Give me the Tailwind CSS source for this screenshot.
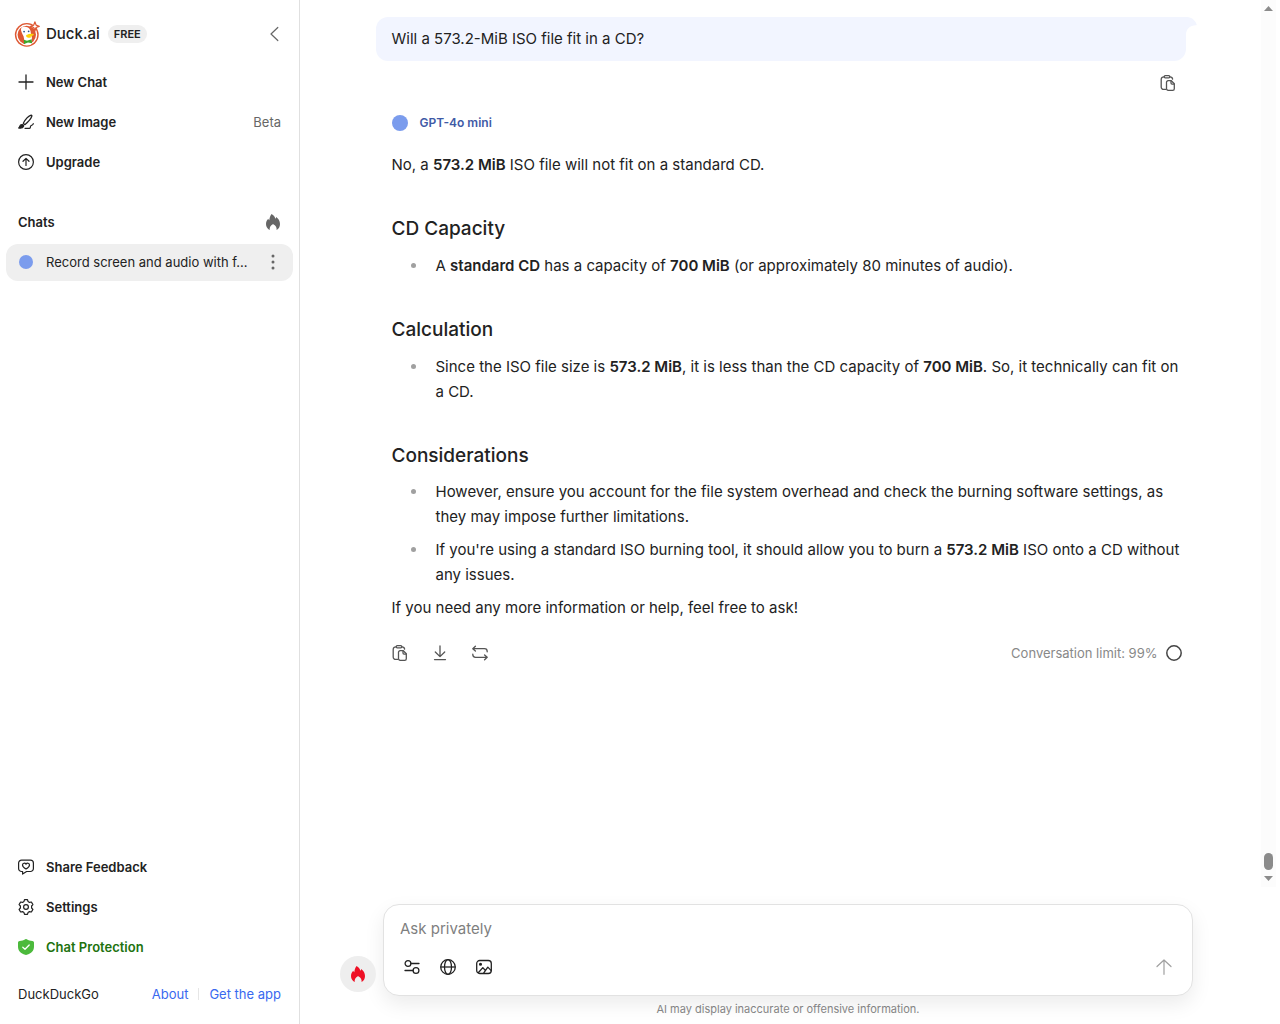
<!DOCTYPE html>
<html lang="en">

<head>
    <meta charset="UTF-8">
    <meta name="viewport" content="width=device-width, initial-scale=1.0">
    <script src="https://cdn.jsdelivr.net/npm/@tailwindcss/browser@4"></script>
    <title>Duck.ai</title>
</head>

<body class="flex h-screen overflow-hidden bg-white font-['Inter',sans-serif] text-[#222222]">
    <!-- shared icons -->
    <svg class="hidden">
        <symbol id="fire" viewBox="0 0 16 16">
            <path fill="currentColor" d="M6.6 0c2 1.1 3.3 2.7 3.7 4.8.5-.4.8-1 .9-1.7C13.600 4.900 15 7.200 15 10c0 2.800-1.300 4.900-3.400 6 .3-2.500-.8-4.500-2.900-5.500-.4-.2-.9-.2-1.300 0-2 1-3 3-2.700 5.500C2.400 14.900 1 12.700 1 10c0-2.100.9-3.900 2.400-5.200.1.700.4 1.200.9 1.500C4.500 3.700 5.300 1.600 6.600 0Z"/>
        </symbol>
        <symbol id="copy" viewBox="0 0 16 16">
            <g fill="none" stroke="currentColor" stroke-width="1.300" stroke-linejoin="round" stroke-linecap="round">
                <path d="M5.500 14.400H3.700a2.500 2.500 0 0 1-2.500-2.500V4.400a2.600 2.600 0 0 1 2.600-2.600h.4M9.800 1.800h.2a2.600 2.600 0 0 1 2.600 2.300"/>
                <rect x="4.200" y=".700" width="5.600" height="2.100" rx="1"/>
                <path d="M8.100 5.700h3.200l3 3v5a1.600 1.600 0 0 1-1.600 1.600H8.100a1.600 1.600 0 0 1-1.600-1.600V7.300a1.600 1.600 0 0 1 1.600-1.600Z"/>
                <path d="M11 5.900v2.200c0 .6.400 1 1 1h2.100"/>
            </g>
        </symbol>
    </svg>

    <aside class="flex w-[300px] shrink-0 flex-col border-r border-[#e0e0e0] px-[6px] text-[13px] leading-5">
        <header class="flex h-[62px] items-center pt-[6px] pr-[10px] pl-2">
            <svg class="size-[26px]" viewBox="0 0 24 24">
                <circle cx="11.800" cy="12.800" r="11" fill="#de5833"/>
                <circle cx="11.800" cy="12.800" r="9.100" fill="#de5833" stroke="#fff" stroke-width="1.200"/>
                <path fill="#fff" d="M6.500 8.500C6 6.300 7.700 4.800 10 5.300c3.500.2 5.500 2.300 5.500 5.700l1.100 4.200-1 6.300c-1.700.6-3.600.7-5.300.2L8.800 14c-1-2-1.900-3.600-2.300-5.500Z"/>
                <circle cx="9.300" cy="9.800" r=".800" fill="#2d4f8e"/>
                <circle cx="13.500" cy="9.500" r=".800" fill="#2d4f8e"/>
                <path fill="#fdd20a" d="M11.500 12.900c1.800-1 4-1.300 6.600-1l.2 1.100c-1.400.8-2.500 1.100-3.500 1.200l2 .4c-1.600 1.200-4.300 1-5.300-.1-.5-.6-.4-1.200 0-1.600Z"/>
                <path fill="#3ca82b" d="m9 17.200 3 1 4.200-1.300.5 3.700-3.800-.8-3.500 1.500Z"/>
                <path fill="#fff" stroke="#de5833" stroke-width="1.200" stroke-linejoin="round" d="m19.300.800 1.100 3 2.900 1.100-2.900 1.100-1.100 3-1.100-3-2.900-1.100 2.900-1.100Z"/>
            </svg>
            <h1 class="ml-[6px] text-[15px] font-medium">Duck.ai</h1>
            <span class="ml-2 rounded-full bg-[#efefef] px-[6px] text-[11px] leading-[18px] font-semibold">FREE</span>
            <button aria-label="Collapse sidebar" class="ml-auto text-[#666666]">
                <svg class="size-4" viewBox="0 0 16 16" fill="none" stroke="currentColor" stroke-width="1.200" stroke-linecap="round" stroke-linejoin="round"><path d="M10.800 1.500 4 8l6.800 6.500"/></svg>
            </button>
        </header>

        <nav class="font-semibold">
            <button class="flex h-10 w-full items-center gap-3 px-3">
                <svg class="size-4" viewBox="0 0 16 16" fill="none" stroke="currentColor" stroke-width="1.300" stroke-linecap="round"><path d="M8 1v14M1 8h14"/></svg>
                New Chat
            </button>
            <button class="flex h-10 w-full items-center gap-3 px-3">
                <svg class="size-4" viewBox="0 0 16 16" fill="none" stroke="currentColor" stroke-width="1.200" stroke-linecap="round" stroke-linejoin="round">
                    <path d="M5.300 9.300C7.600 5 10.700 1.900 13.200 1.200c.5-.1.800.3.700.800-.700 2.500-3.500 5.700-7.100 8.700Z"/>
                    <path fill="currentColor" d="M4.300 10.700c1 .1 1.500.9 1.200 1.800-.6 1.400-2.700 1.900-4.900 1.500.9-.4.900-.9 1.100-1.600.3-1.100 1.300-1.800 2.600-1.700Z"/>
                    <path d="M7 14.300h4.500c1.400 0 .5-1.700 1.300-2.500.8-.8 2.500-.5 2.500-2.300"/>
                </svg>
                New Image
                <span class="ml-auto font-normal text-[#666666]">Beta</span>
            </button>
            <button class="flex h-10 w-full items-center gap-3 px-3">
                <svg class="size-4" viewBox="0 0 16 16" fill="none" stroke="currentColor" stroke-width="1.200" stroke-linecap="round" stroke-linejoin="round"><circle cx="8" cy="8" r="7.400"/><path d="M8 11.500v-7M5 7.300l3-2.900 3 2.900"/></svg>
                Upgrade
            </button>
        </nav>

        <section class="mt-5">
            <div class="flex h-10 items-center justify-between px-3">
                <h2 class="font-semibold">Chats</h2>
                <button aria-label="Clear chats" class="text-[#666666]"><svg class="size-4"><use href="#fire"/></svg></button>
            </div>
            <div class="mt-[2px] flex h-[37px] items-center rounded-xl bg-[#efefef] px-3 pb-[2px]">
                <a href="#" class="flex min-w-0 flex-1 items-center gap-3">
                    <span class="m-px size-[14px] shrink-0 rounded-full bg-[#7b9ced]"></span>
                    <span class="truncate">Record screen and audio with f...</span>
                </a>
                <button aria-label="Chat options" class="text-[#666666]">
                    <svg class="size-4" viewBox="0 0 16 16" fill="currentColor"><circle cx="8" cy="2" r="1.500"/><circle cx="8" cy="8" r="1.500"/><circle cx="8" cy="14" r="1.500"/></svg>
                </button>
            </div>
        </section>

        <footer class="mt-auto">
            <button class="flex h-10 w-full items-center gap-3 px-3 font-semibold">
                <svg class="size-4" viewBox="0 0 16 16" fill="none" stroke="currentColor" stroke-width="1.200" stroke-linejoin="round">
                    <path d="M3.600 1.100h8.800a3 3 0 0 1 3 3v5.400a3 3 0 0 1-3 3H8.600l-4 2.600v-2.600h-1a3 3 0 0 1-3-3V4.100a3 3 0 0 1 3-3Z"/>
                    <path d="M8 10C5.600 8.700 4.500 7.500 4.500 6c0-1.900 2.500-2.500 3.500-.8 1-1.700 3.500-1.100 3.500.8 0 1.500-1.100 2.700-3.500 4Z"/>
                </svg>
                Share Feedback
            </button>
            <button class="flex h-10 w-full items-center gap-3 px-3 font-semibold">
                <svg class="size-4" viewBox="0 0 16 16" fill="none" stroke="currentColor" stroke-width="1.200" stroke-linejoin="round">
                    <path d="M6.500.700h3l.6 1.900 1.300.8 2-.4 1.500 2.600L13.600 7v2l1.300 1.400-1.500 2.600-2-.4-1.300.800-.6 1.900h-3l-.6-1.900-1.300-.800-2 .4-1.500-2.600L2.400 9V7L1.100 5.600 2.600 3l2 .4 1.300-.800Z"/>
                    <circle cx="8" cy="8" r="2.400"/>
                </svg>
                Settings
            </button>
            <button class="flex h-10 w-full items-center gap-3 px-3 font-semibold text-[#21720f]">
                <svg class="size-4" viewBox="0 0 16 16"><path fill="#4cba3c" d="M7.200.300a1.500 1.500 0 0 1 1.600 0c1.600 1 3.400 1.500 5.600 1.700.9.1 1.600.8 1.600 1.700v3.800c0 4.200-2.700 7-7.200 8.300a3 3 0 0 1-1.600 0C2.700 14.500 0 11.700 0 7.500V3.700c0-.9.7-1.600 1.600-1.700C3.800 1.800 5.600 1.300 7.200.300Z"/><path fill="none" stroke="#fff" stroke-width="1.300" stroke-linecap="round" stroke-linejoin="round" d="m4.800 8.200 2.200 2.100 4.200-4.300"/></svg>
                Chat Protection
            </button>
            <div class="flex h-[57px] items-center px-3 pb-1">
                <span>DuckDuckGo</span>
                <a href="#" class="ml-auto text-[#3969ef]">About</a>
                <span class="mx-[10px] h-3 w-px bg-[#e6e6e6]"></span>
                <a href="#" class="text-[#3969ef]">Get the app</a>
            </div>
        </footer>
    </aside>

    <main class="flex min-w-0 flex-1 flex-col">
        <div class="mr-1 flex min-h-0 flex-1">
            <div class="min-w-0 flex-1 overflow-hidden px-6">
                <div class="mx-auto max-w-[810px] pt-[17px] text-[15px] leading-[25px]">
                    <div class="relative rounded-xl rounded-tr-none bg-[#f2f5ff] px-4 py-[10px] leading-6">
                        Will a 573.2-MiB ISO file fit in a CD?
                        <svg class="absolute top-0 left-full h-5 w-[11px]" viewBox="0 0 11 20"><path fill="#f2f5ff" d="M0 0c5 0 9 2.500 10.600 7.300.2.700-.1 1-.8 1C4 8.500 0 12 0 18Z"/></svg>
                    </div>
                    <div class="mt-[14px] flex justify-end pr-[10px] text-[#555555]">
                        <button aria-label="Copy message"><svg class="size-4"><use href="#copy"/></svg></button>
                    </div>

                    <article class="pt-[22px] pl-4">
                        <div class="flex h-5 items-center gap-3 text-xs font-semibold text-[#3f5aa6]">
                            <span class="size-4 rounded-full bg-[#7b9ced]"></span>GPT-4o mini
                        </div>
                        <p class="mt-[19px]">No, a <strong class="font-semibold">573.2 MiB</strong> ISO file will not fit on a standard CD.</p>

                        <h3 class="mt-[38px] text-[19px] leading-7 font-medium">CD Capacity</h3>
                        <ul class="mt-[10px] list-none">
                            <li class="flex gap-5"><span class="mt-[10px] ml-[19px] size-[5px] shrink-0 rounded-full bg-[#a0a0a0]"></span>
                                <p>A <strong class="font-semibold">standard CD</strong> has a capacity of <strong class="font-semibold">700 MiB</strong> (or approximately 80 minutes of audio).</p>
                            </li>
                        </ul>

                        <h3 class="mt-[38px] text-[19px] leading-7 font-medium">Calculation</h3>
                        <ul class="mt-[10px] list-none">
                            <li class="flex gap-5"><span class="mt-[10px] ml-[19px] size-[5px] shrink-0 rounded-full bg-[#a0a0a0]"></span>
                                <p>Since the ISO file size is <strong class="font-semibold">573.2 MiB</strong>, it is less than the CD capacity of <strong class="font-semibold">700 MiB</strong>. So, it technically can fit on a&nbsp;CD.</p>
                            </li>
                        </ul>

                        <h3 class="mt-[38px] text-[19px] leading-7 font-medium">Considerations</h3>
                        <ul class="mt-[9px] list-none space-y-2">
                            <li class="flex gap-5"><span class="mt-[10px] ml-[19px] size-[5px] shrink-0 rounded-full bg-[#a0a0a0]"></span>
                                <p>However, ensure you account for the file system overhead and check the burning software settings, as they may impose further limitations.</p>
                            </li>
                            <li class="flex gap-5"><span class="mt-[10px] ml-[19px] size-[5px] shrink-0 rounded-full bg-[#a0a0a0]"></span>
                                <p>If you're using a standard ISO burning tool, it should allow you to burn a <strong class="font-semibold">573.2 MiB</strong> ISO onto a CD without any issues.</p>
                            </li>
                        </ul>
                        <p class="mt-2">If you need any more information or help, feel free to ask!</p>

                        <div class="mt-[23px] flex h-5 items-center gap-6 text-[#555555]">
                            <button aria-label="Copy answer"><svg class="size-4"><use href="#copy"/></svg></button>
                            <button aria-label="Download">
                                <svg class="size-4" viewBox="0 0 16 16" fill="none" stroke="currentColor" stroke-width="1.300" stroke-linecap="round" stroke-linejoin="round"><path d="M8 1v10.500M3.300 7 8 11.600 12.700 7M2.500 14.600h11"/></svg>
                            </button>
                            <button aria-label="Regenerate">
                                <svg class="size-4" viewBox="0 0 16 16" fill="none" stroke="currentColor" stroke-width="1.300" stroke-linecap="round" stroke-linejoin="round"><path d="M3.400 1.300.8 3.700l2.600 2.400M1 3.700h11.500a2.700 2.700 0 0 1 2.700 2.700v.400M12.600 9.900l2.600 2.400-2.600 2.400M15 12.300H3.500A2.700 2.700 0 0 1 .8 9.600v-.400"/></svg>
                            </button>
                            <div class="mr-1 ml-auto flex items-center gap-2 text-[13px] text-[#888888]">
                                Conversation limit: 99%
                                <svg class="size-4" viewBox="0 0 16 16" fill="none" stroke="#444444" stroke-width="1.500"><circle cx="8" cy="8" r="7.200"/></svg>
                            </div>
                        </div>
                    </article>
                </div>
            </div>

            <!-- scroll track -->
            <div class="flex w-[15px] flex-col items-center bg-[#fcfcfc] py-[6px] text-[#8b8b8b]">
                <svg class="h-[5px] w-[9px]" viewBox="0 0 9 5"><path fill="currentColor" d="M0 5 4.500 0 9 5Z"/></svg>
                <span class="mt-auto h-[17px] w-[9px] rounded-full bg-current"></span>
                <svg class="mt-[6px] h-[5px] w-[9px]" viewBox="0 0 9 5"><path fill="currentColor" d="M0 0h9L4.500 5Z"/></svg>
            </div>
        </div>

        <div class="pt-[17px] pr-6 pl-5">
            <form class="relative mx-auto max-w-[810px] rounded-2xl border border-[#e2e2e2] bg-white px-4 pt-[11px] pb-[18px] shadow-[0_8px_20px_rgba(0,0,0,0.08)]">
                <button type="button" aria-label="Clear this chat" class="absolute right-full bottom-[3px] mr-2 flex size-9 items-center justify-center rounded-full bg-[#eeeeee] text-[#ee1025]"><svg class="size-4"><use href="#fire"/></svg></button>
                <input type="text" aria-label="Ask privately" placeholder="Ask privately" class="block h-6 w-full text-[15px] outline-none placeholder:text-[#7f7f7f]">
                <div class="mt-[17px] flex h-5 items-center gap-5 pl-1">
                    <button type="button" aria-label="Customize">
                        <svg class="size-4" viewBox="0 0 16 16" fill="none" stroke="currentColor" stroke-width="1.300" stroke-linecap="round"><circle cx="4" cy="4.500" r="2.900"/><path d="M7 4.500h8M1 11.500h8"/><circle cx="12" cy="11.500" r="2.900"/></svg>
                    </button>
                    <button type="button" aria-label="Web search">
                        <svg class="size-4" viewBox="0 0 16 16" fill="none" stroke="currentColor" stroke-width="1.300"><circle cx="8" cy="8" r="7.300"/><ellipse cx="8" cy="8" rx="3.500" ry="7.300"/><path d="M.8 8h14.400"/></svg>
                    </button>
                    <button type="button" aria-label="Add image">
                        <svg class="size-4" viewBox="0 0 16 16" fill="none" stroke="currentColor" stroke-width="1.300" stroke-linejoin="round" stroke-linecap="round"><rect x=".700" y="1.500" width="14.600" height="13" rx="3"/><circle cx="4.500" cy="5.200" r=".900" fill="currentColor"/><path d="m2.500 13.500 4.300-4.900 2.400 2.600M7.800 13.800l4-5.700 3.400 3.500"/></svg>
                    </button>
                    <button type="submit" aria-label="Send" class="mr-1 ml-auto text-[#a0a0a0]">
                        <svg class="size-4" viewBox="0 0 16 16" fill="none" stroke="currentColor" stroke-width="1.200" stroke-linecap="round" stroke-linejoin="round"><path d="M8 15.300V1M1 7.500 8 1l7 6.500"/></svg>
                    </button>
                </div>
            </form>
            <p class="pt-[3px] pb-[5px] text-center text-[11px] leading-5 text-[#888888]">AI may display inaccurate or offensive information.</p>
        </div>
    </main>
</body>

</html>
